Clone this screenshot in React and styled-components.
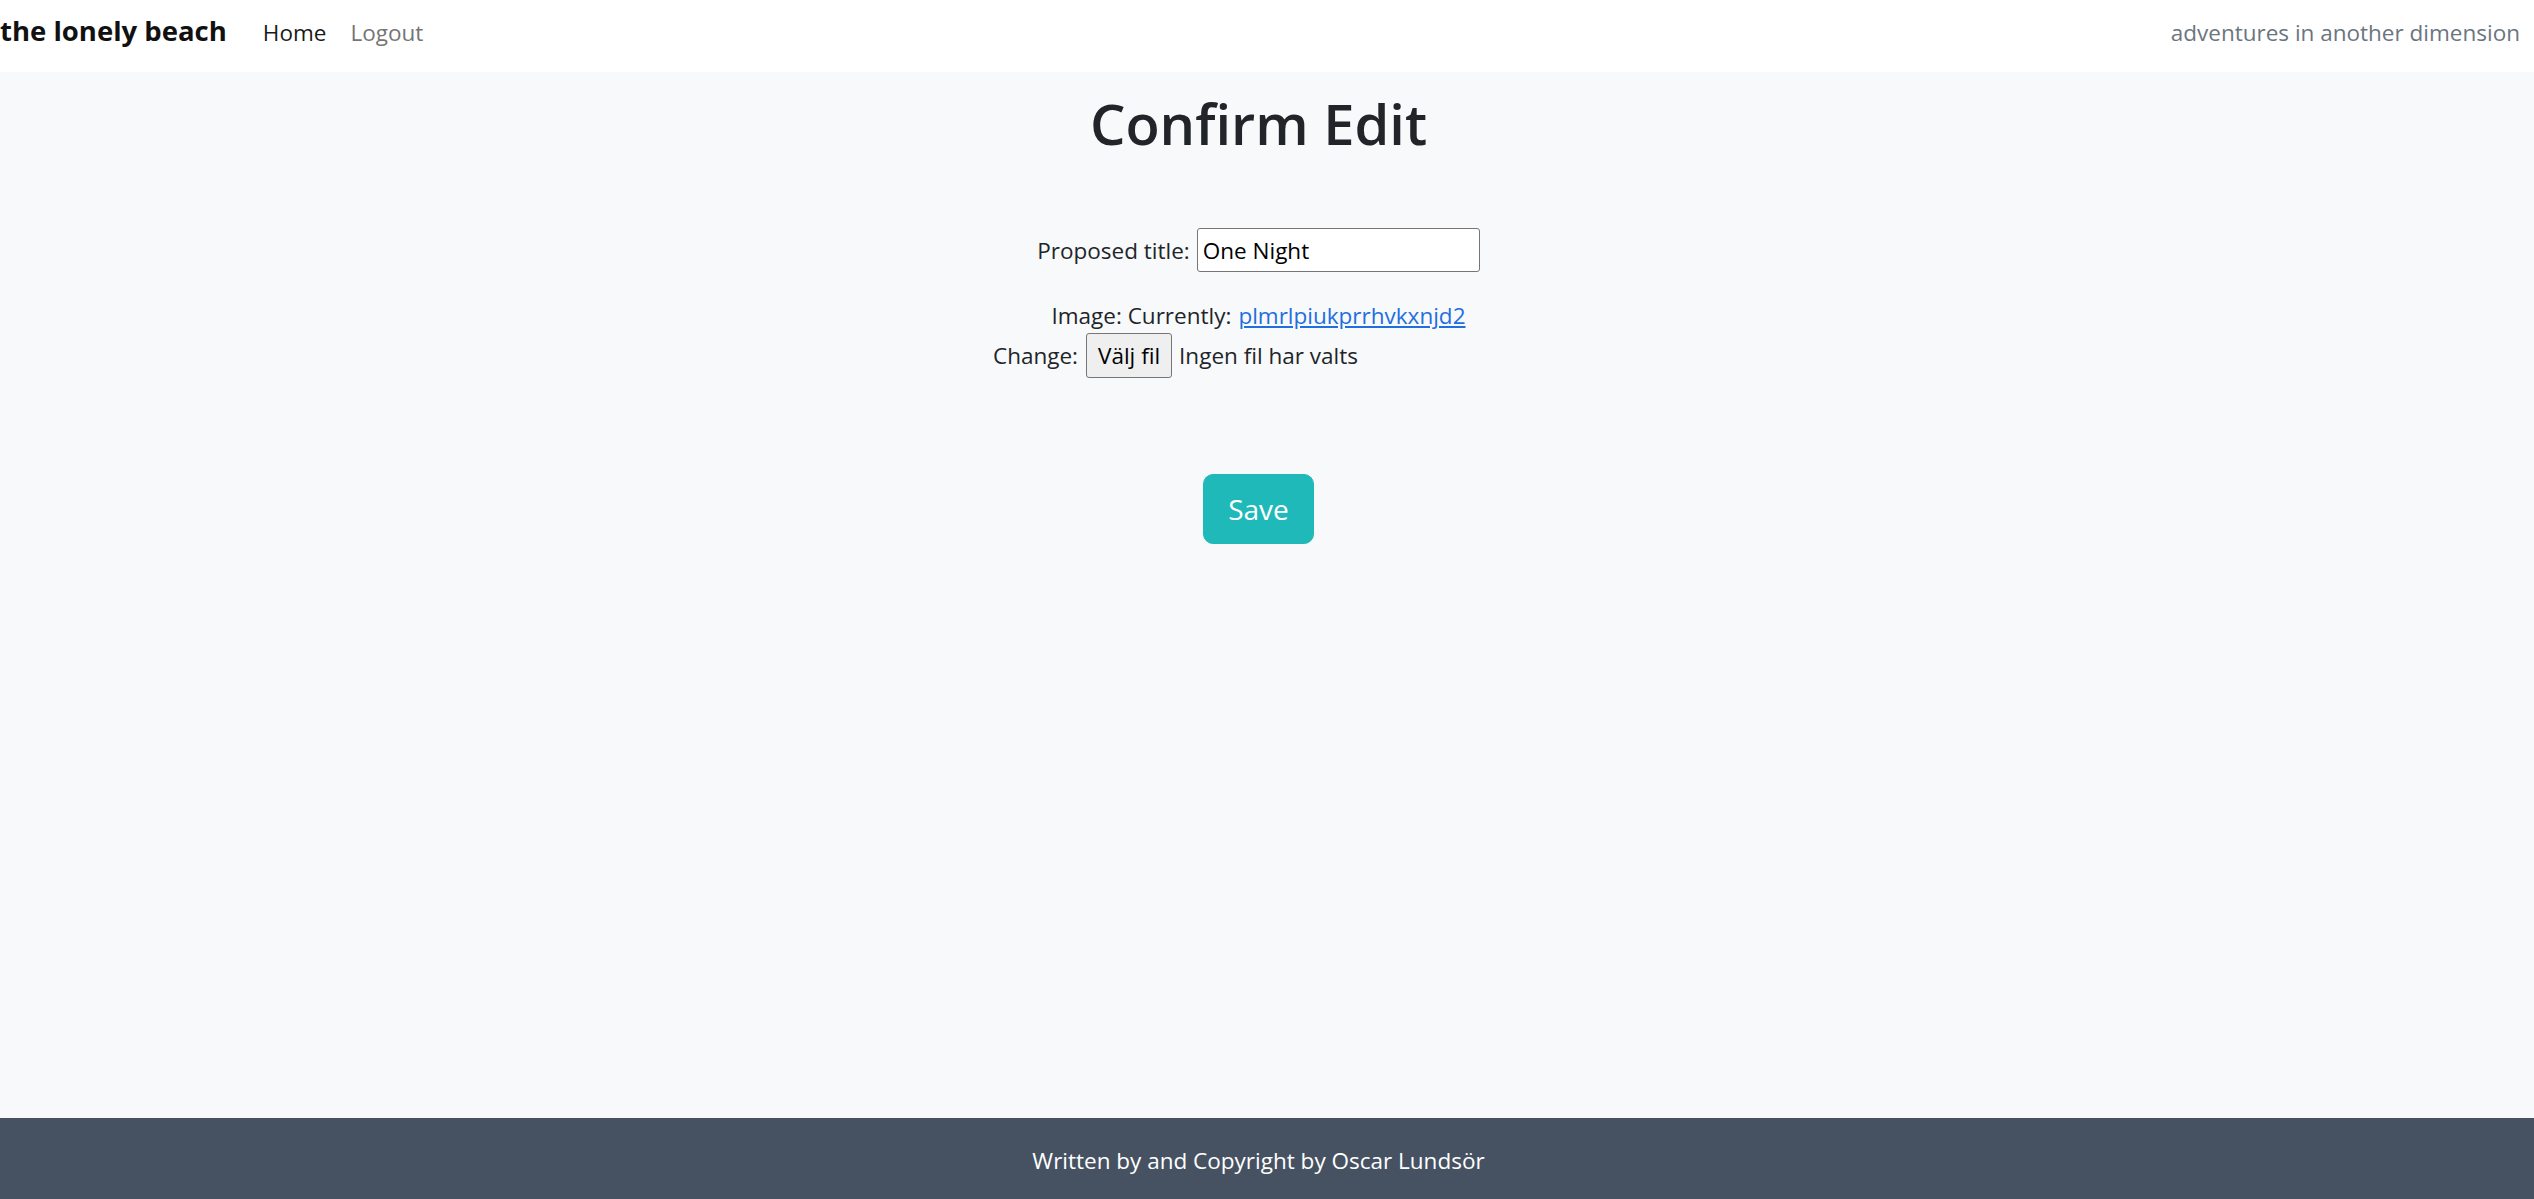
import React from "react";
import styled, { createGlobalStyle } from "styled-components";

const GlobalStyle = createGlobalStyle`
  html, body {
    margin: 0;
    padding: 0;
  }
  body {
    background: #f8f9fa;
    font-family: "Open Sans", "Noto Sans", sans-serif;
    font-size: 22.5px;
    color: #212529;
  }
`;

const Page = styled.div`
  min-height: 100vh;
  display: flex;
  flex-direction: column;
`;

const Navbar = styled.nav`
  height: 72px;
  box-sizing: border-box;
  background: #ffffff;
  display: flex;
  align-items: baseline;
  padding: 12px 14px 0 0;
`;

const Brand = styled.a`
  font-size: 27.5px;
  font-weight: 700;
  color: #111;
  text-decoration: none;
  margin-right: 24px;
`;

const NavLink = styled.a`
  padding: 0 12px;
  color: ${(p) => (p.$active ? "#1a1a1a" : "#757575")};
  text-decoration: none;
`;

const Tagline = styled.span`
  margin-left: auto;
  color: #6c757d;
`;

const Main = styled.main`
  flex: 1;
  display: flex;
  flex-direction: column;
  align-items: center;
  padding: 15px 17px 0 0;
`;

const Title = styled.h1`
  margin: 0;
  font-size: 56px;
  font-weight: 600;
  line-height: 72px;
  color: #212529;
`;

const Form = styled.form`
  margin-top: 69px;
  display: flex;
  flex-direction: column;
  align-items: center;
`;

const Row = styled.div`
  display: flex;
  align-items: center;
  justify-content: center;
  margin-top: ${(p) => p.$gap || 0}px;
  line-height: ${(p) => (p.$lh ? `${p.$lh}px` : "normal")};
`;

const Label = styled.label`
  margin-right: 7px;
`;

const TextInput = styled.input`
  width: 283px;
  height: 44px;
  box-sizing: border-box;
  border: 1px solid #767676;
  border-radius: 3px;
  background: #fff;
  padding: 0 5px;
  font-family: inherit;
  font-size: 22.5px;
  color: #000;
`;

const Link = styled.a`
  color: #1f6fe0;
  text-decoration: underline;
  margin-left: 7px;
`;

const FileInput = styled.span`
  width: 438px;
  display: flex;
  align-items: center;
  margin-left: 8px;
`;

const FileButton = styled.button`
  height: 45px;
  box-sizing: border-box;
  padding: 0 11px;
  background: #efefef;
  border: 1px solid #767676;
  border-radius: 3px;
  font-family: inherit;
  font-size: 22.5px;
  color: #000;
  margin-right: 7px;
`;

const SaveButton = styled.button`
  margin-top: 96px;
  padding: 12px 24px;
  line-height: 44px;
  font-family: inherit;
  font-size: 28px;
  color: #fff;
  background: #20b9b9;
  border: 1px solid #20b9b9;
  border-radius: 10px;
`;

const Footer = styled.footer`
  height: 81px;
  box-sizing: border-box;
  background: #465262;
  color: #fff;
  display: flex;
  align-items: center;
  justify-content: center;
  padding: 4px 17px 0 0;
`;

export default function App() {
  return (
    <>
      <GlobalStyle />
      <Page>
        <Navbar>
          <Brand href="#">the lonely beach</Brand>
          <NavLink href="#" $active>Home</NavLink>
          <NavLink href="#">Logout</NavLink>
          <Tagline>adventures in another dimension</Tagline>
        </Navbar>
        <Main>
          <Title>Confirm Edit</Title>
          <Form onSubmit={(e) => e.preventDefault()}>
            <Row>
              <Label htmlFor="title">Proposed title:</Label>
              <TextInput id="title" defaultValue="One Night" />
            </Row>
            <Row $gap={27} $lh={34}>
              Image: Currently:
              <Link href="#">plmrlpiukprrhvkxnjd2</Link>
            </Row>
            <Row>
              Change:
              <FileInput>
                <FileButton type="button">Välj fil</FileButton>
                Ingen fil har valts
              </FileInput>
            </Row>
            <SaveButton type="submit">Save</SaveButton>
          </Form>
        </Main>
        <Footer>Written by and Copyright by Oscar Lundsör</Footer>
      </Page>
    </>
  );
}
